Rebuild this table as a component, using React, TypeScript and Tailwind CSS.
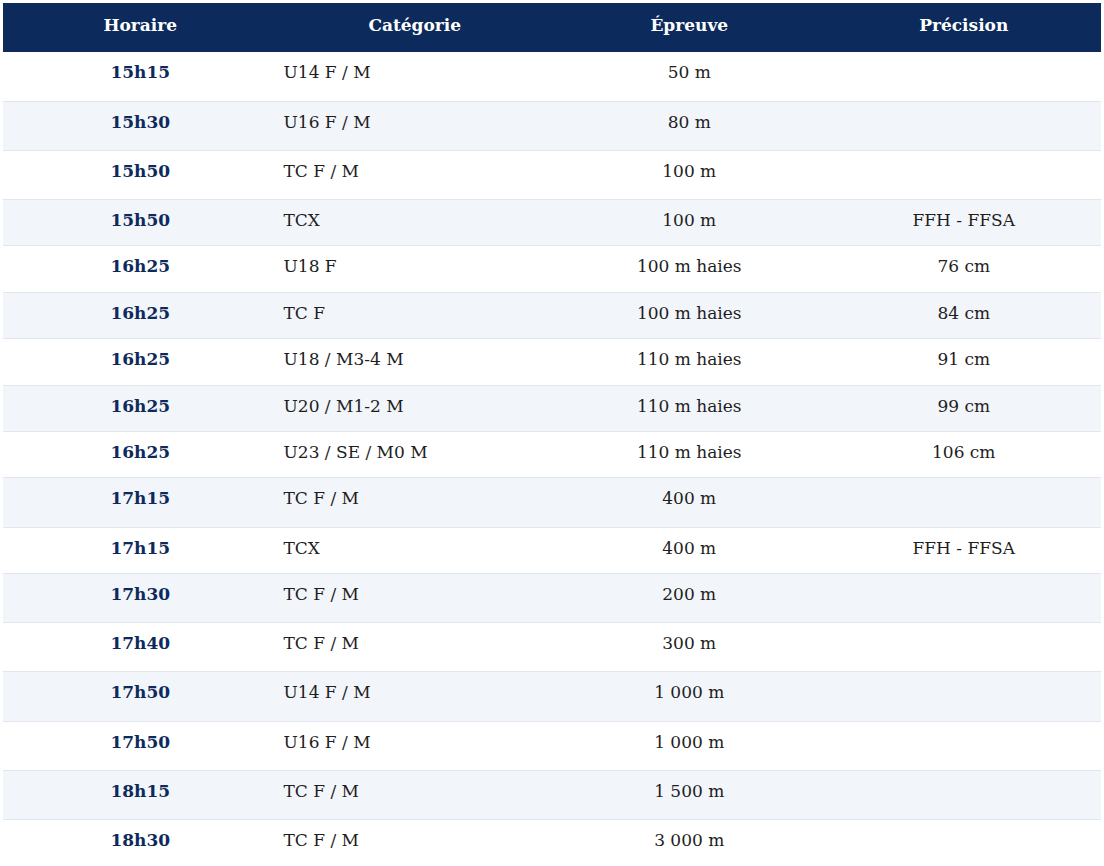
const ROWS: [string, string, string, string][] = [
  ['15h15', 'U14 F / M', '50 m', ''],
  ['15h30', 'U16 F / M', '80 m', ''],
  ['15h50', 'TC F / M', '100 m', ''],
  ['15h50', 'TCX', '100 m', 'FFH - FFSA'],
  ['16h25', 'U18 F', '100 m haies', '76 cm'],
  ['16h25', 'TC F', '100 m haies', '84 cm'],
  ['16h25', 'U18 / M3-4 M', '110 m haies', '91 cm'],
  ['16h25', 'U20 / M1-2 M', '110 m haies', '99 cm'],
  ['16h25', 'U23 / SE / M0 M', '110 m haies', '106 cm'],
  ['17h15', 'TC F / M', '400 m', ''],
  ['17h15', 'TCX', '400 m', 'FFH - FFSA'],
  ['17h30', 'TC F / M', '200 m', ''],
  ['17h40', 'TC F / M', '300 m', ''],
  ['17h50', 'U14 F / M', '1 000 m', ''],
  ['17h50', 'U16 F / M', '1 000 m', ''],
  ['18h15', 'TC F / M', '1 500 m', ''],
  ['18h30', 'TC F / M', '3 000 m', ''],
];

export default function App() {
  return (
    <div className="min-h-screen bg-white p-[3px] font-['DejaVu_Serif',serif] text-[17px]">
      <table className="w-full table-fixed border-collapse">
        <thead>
          <tr className="h-[49px] bg-[#0c2a5c] text-white">
            <th className="pb-[4px] align-middle font-bold">Horaire</th>
            <th className="pb-[4px] align-middle font-bold">Catégorie</th>
            <th className="pb-[4px] align-middle font-bold">Épreuve</th>
            <th className="pb-[4px] align-middle font-bold">Précision</th>
          </tr>
        </thead>
        <tbody>
          {ROWS.map(([time, cat, event, note], i) => (
            <tr
              key={i}
              className={`${note ? 'h-[46.4px]' : 'h-[49.2px]'} border-b border-[#e1e7ef] ${i % 2 === 1 ? 'bg-[#f2f5fa]' : 'bg-white'} text-[#1e1e1e]`}
            >
              <td className="pt-[8px] text-center align-top font-bold text-[#0d2a5c]">{time}</td>
              <td className="pt-[8px] pl-[6px] text-left align-top">{cat}</td>
              <td className="pt-[8px] text-center align-top">{event}</td>
              <td className="pt-[8px] text-center align-top">{note}</td>
            </tr>
          ))}
        </tbody>
      </table>
    </div>
  );
}
